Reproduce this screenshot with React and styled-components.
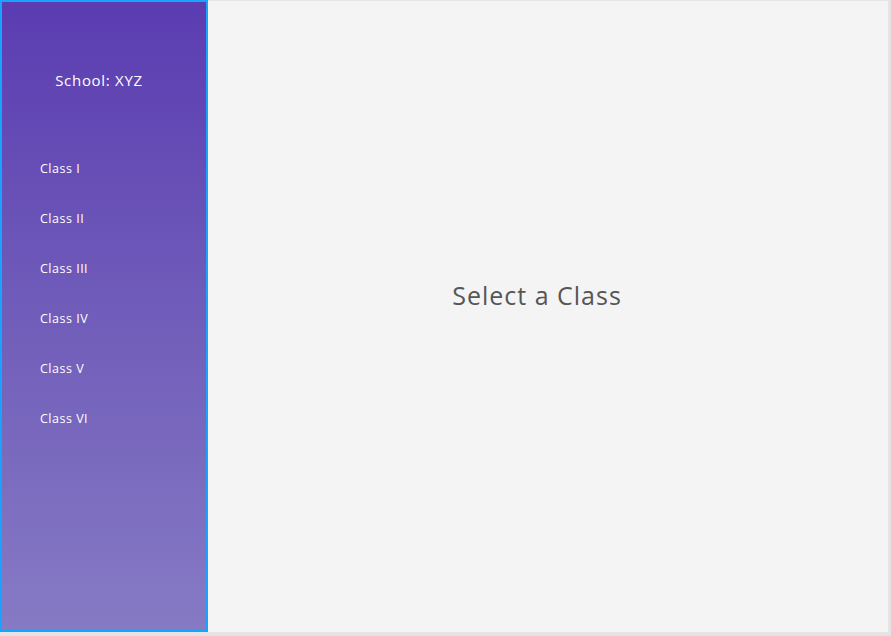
import React from "react";
import styled, { createGlobalStyle } from "styled-components";

const GlobalStyle = createGlobalStyle`
  html, body {
    margin: 0;
    padding: 0;
    background: #e4e4e4;
    font-family: "Open Sans", "Liberation Sans", sans-serif;
  }
`;

const LAYOUT = styled.div`
  display: flex;
  width: 888px;
  height: 632px;
`;

const SIDEBAR = styled.nav`
  box-sizing: border-box;
  width: 208px;
  height: 632px;
  border: 2px solid #1aa2ff;
  background: linear-gradient(180deg, #5b3cb1 0%, #6e5ab9 45%, #867ac4 100%);
  display: flex;
  flex-direction: column;
`;

const SCHOOL = styled.h2`
  margin: 0;
  padding: 67px 10px 0 0;
  height: 90px;
  text-align: center;
  color: #ffffff;
  font-size: 15px;
  font-weight: 400;
  letter-spacing: 0.7px;
  line-height: 22px;
`;

const LIST = styled.ul`
  list-style: none;
  margin: 0;
  padding: 0 0 0 38px;
  display: flex;
  flex-direction: column;
`;

const ITEM = styled.li`
  height: 50px;
  line-height: 20px;
  color: #ffffff;
  font-size: 12.5px;
  letter-spacing: 0.5px;
  cursor: pointer;
`;

const MAIN = styled.main`
  flex: 1;
  margin-top: 1px;
  background: #f4f4f4;
  display: flex;
  justify-content: center;
  padding-right: 22px;
`;

const PLACEHOLDER = styled.h1`
  margin: 0;
  padding-top: 277px;
  color: #565656;
  font-size: 25px;
  font-weight: 400;
  letter-spacing: 1px;
  line-height: 34px;
`;

const classes = ["Class I", "Class II", "Class III", "Class IV", "Class V", "Class VI"];

export default function App() {
  return (
    <>
      <GlobalStyle />
      <LAYOUT>
        <SIDEBAR>
          <SCHOOL>School: XYZ</SCHOOL>
          <LIST>
            {classes.map((c) => (
              <ITEM key={c}>{c}</ITEM>
            ))}
          </LIST>
        </SIDEBAR>
        <MAIN>
          <PLACEHOLDER>Select a Class</PLACEHOLDER>
        </MAIN>
      </LAYOUT>
    </>
  );
}
